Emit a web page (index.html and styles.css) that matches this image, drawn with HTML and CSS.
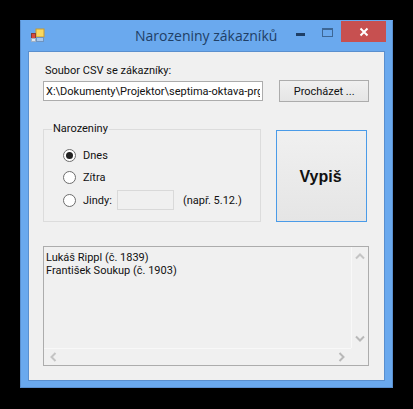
FILE: index.html
```html
<!DOCTYPE html>
<html lang="cs">
<head>
    <meta charset="UTF-8">
    <meta name="viewport" content="width=device-width, initial-scale=1.0">
    <title>Narozeniny zákazníků</title>
    <link rel="stylesheet" href="styles.css">
</head>
<body>
    <div class="window">
        <div class="titlebar">
            <svg class="app-icon" width="16" height="16" viewBox="0 0 16 16">
                <rect x="6" y="1" width="8" height="8" fill="#f8d860" stroke="#c89a30"/>
                <rect x="1.5" y="5.5" width="4" height="5" fill="#d84a40" stroke="#8c3a34"/>
                <rect x="6.5" y="9.5" width="7" height="4" fill="#a8c8ec" stroke="#6f94c0"/>
                <rect x="1.5" y="10.5" width="4" height="3" fill="#dfe6ee" stroke="#9fb0c4"/>
            </svg>
            <div class="title">Narozeniny zákazníků</div>
            <div class="win-buttons">
                <div class="win-btn"><span class="min-icon"></span></div>
                <div class="win-btn"><span class="max-icon"></span></div>
                <div class="close-btn">
                    <svg width="10" height="10" viewBox="0 0 10 10">
                        <path d="M1.5 1.5 L8.5 8.5 M8.5 1.5 L1.5 8.5" stroke="#fff" stroke-width="2"/>
                    </svg>
                </div>
            </div>
        </div>

        <div class="client">
            <label class="file-label" for="soubor">Soubor CSV se zákazníky:</label>
            <div class="file-row">
                <input class="file-input" type="text" id="soubor" value="X:\Dokumenty\Projektor\septima-oktava-prg\zakaznici.csv" readonly>
                <button class="browse" type="button">Procházet ...</button>
            </div>

            <div class="middle">
                <fieldset class="group">
                    <legend>Narozeniny</legend>
                    <div class="radio-row"><span class="radio checked"></span>Dnes</div>
                    <div class="radio-row"><span class="radio"></span>Zítra</div>
                    <div class="radio-row">
                        <span class="radio"></span>Jindy:
                        <span class="date-box"></span>
                        <span class="hint">(např. 5.12.)</span>
                    </div>
                </fieldset>
                <button class="run" type="button">Vypiš</button>
            </div>

            <div class="output">
                <div class="output-main">
                    <div class="output-text">
                        <div class="output-line">Lukáš Rippl (č. 1839)</div>
                        <div class="output-line">František Soukup (č. 1903)</div>
                    </div>
                    <div class="vscroll">
                        <svg width="10" height="7" viewBox="0 0 10 7"><path d="M1 5.5 L5 1.5 L9 5.5" fill="none" stroke="#c4c4c4" stroke-width="2"/></svg>
                        <svg width="10" height="7" viewBox="0 0 10 7"><path d="M1 1.5 L5 5.5 L9 1.5" fill="none" stroke="#b8b8b8" stroke-width="2"/></svg>
                    </div>
                </div>
                <div class="hscroll">
                    <svg width="7" height="10" viewBox="0 0 7 10"><path d="M5.5 1 L1.5 5 L5.5 9" fill="none" stroke="#c4c4c4" stroke-width="2"/></svg>
                    <svg width="7" height="10" viewBox="0 0 7 10"><path d="M1.5 1 L5.5 5 L1.5 9" fill="none" stroke="#b8b8b8" stroke-width="2"/></svg>
                </div>
            </div>
        </div>
    </div>
</body>
</html>
```

FILE: styles.css
```css
html, body {
    margin: 0;
    padding: 0;
    background-color: #000;
    overflow: hidden;
}

body {
    height: 409px;
    font-family: Roboto, sans-serif;
    font-size: 11px;
    color: #111;
}

.window {
    box-sizing: border-box;
    width: 373px;
    height: 368px;
    margin: 20px 0 0 20px;
    background-color: #6aa9ee;
    border: 1px solid #5a8fce;
    border-top-color: #6aa9ee;
    padding: 0 7px 6px 7px;
    display: flex;
    flex-direction: column;
}

.titlebar {
    height: 30px;
    flex-shrink: 0;
    display: flex;
    align-items: flex-start;
    position: relative;
}

.app-icon {
    margin: 7px 0 0 2px;
}

.title {
    position: absolute;
    left: 107px;
    top: 5px;
    font-family: "Open Sans", sans-serif;
    font-size: 14px;
    line-height: 20px;
    color: #1f3f66;
}

.win-buttons {
    margin-left: auto;
    display: flex;
}

.win-btn {
    width: 27px;
    height: 21px;
    display: flex;
    align-items: center;
    justify-content: center;
}

.min-icon {
    width: 9px;
    height: 3px;
    margin-top: 6px;
    background-color: #1f3f66;
}

.max-icon {
    box-sizing: border-box;
    width: 11px;
    height: 9px;
    margin-top: 2px;
    border: 1px solid #3d6796;
    border-top-width: 2px;
}

.close-btn {
    width: 45px;
    height: 21px;
    margin-right: -1px;
    background-color: #c75050;
    display: flex;
    align-items: center;
    justify-content: center;
}

.client {
    flex: 1;
    background-color: #f0f0f0;
    border: 1px solid #5a8fce;
    padding: 11px 15px 13px 14px;
    display: flex;
    flex-direction: column;
}

.file-label {
    display: block;
    margin-left: 2px;
    line-height: 16px;
}

.file-row {
    display: flex;
    align-items: center;
    margin-top: 1px;
}

.file-input {
    box-sizing: border-box;
    width: 221px;
    height: 20px;
    padding: 0 2px;
    background-color: #fff;
    border: 1px solid #acacac;
    font-family: Roboto, sans-serif;
    font-size: 11px;
    color: #111;
    outline: none;
}

.browse {
    box-sizing: border-box;
    width: 90px;
    height: 22px;
    margin-left: 16px;
    background: linear-gradient(#f0f0f0, #e5e5e5);
    border: 1px solid #acacac;
    font-family: Roboto, sans-serif;
    font-size: 11px;
    color: #111;
    padding: 0;
}

.middle {
    display: flex;
    margin-top: 28px;
}

.group {
    box-sizing: border-box;
    width: 218px;
    height: 101px;
    margin: -9px 0 0 0;
    padding: 7px 0 0 19px;
    border: 1px solid #dcdcdc;
    min-width: 0;
}

.group legend {
    padding: 0 1px;
    margin-left: -11px;
    line-height: 16px;
}

.radio-row {
    display: flex;
    align-items: center;
    height: 22.5px;
}

.radio {
    box-sizing: border-box;
    width: 13px;
    height: 13px;
    margin-right: 7px;
    border: 1px solid #6d6d6d;
    border-radius: 50%;
    background-color: #fff;
    display: flex;
    align-items: center;
    justify-content: center;
}

.radio.checked::after {
    content: "";
    width: 7px;
    height: 7px;
    border-radius: 50%;
    background-color: #222;
}

.date-box {
    box-sizing: border-box;
    width: 57px;
    height: 20px;
    margin-left: 5px;
    background-color: #f0f0f0;
    border: 1px solid #d9d9d9;
}

.hint {
    margin-left: 9px;
}

.run {
    box-sizing: border-box;
    width: 91px;
    height: 92px;
    margin: 0 0 0 15px;
    background: linear-gradient(#f0f0f0, #e5e5e5);
    border: 1px solid #4a9be8;
    font-family: "Liberation Sans", sans-serif;
    font-size: 16px;
    font-weight: bold;
    color: #111;
    padding: 2px 2px 0 0;
}

.output {
    box-sizing: border-box;
    width: 326px;
    height: 120px;
    margin-top: 24px;
    background-color: #f0f0f0;
    border: 1px solid #acacac;
    display: flex;
    flex-direction: column;
}

.output-main {
    flex: 1;
    display: flex;
    min-height: 0;
}

.output-text {
    flex: 1;
    padding: 4px 2px;
}

.output-line {
    height: 13px;
    line-height: 13px;
}

.vscroll {
    box-sizing: border-box;
    width: 17px;
    border-left: 1px solid #f8f8f8;
    display: flex;
    flex-direction: column;
    justify-content: space-between;
    align-items: center;
    padding: 6px 0;
}

.hscroll {
    box-sizing: border-box;
    height: 17px;
    margin-right: 17px;
    border-top: 1px solid #f8f8f8;
    display: flex;
    justify-content: space-between;
    align-items: center;
    padding: 0 6px;
}
```
